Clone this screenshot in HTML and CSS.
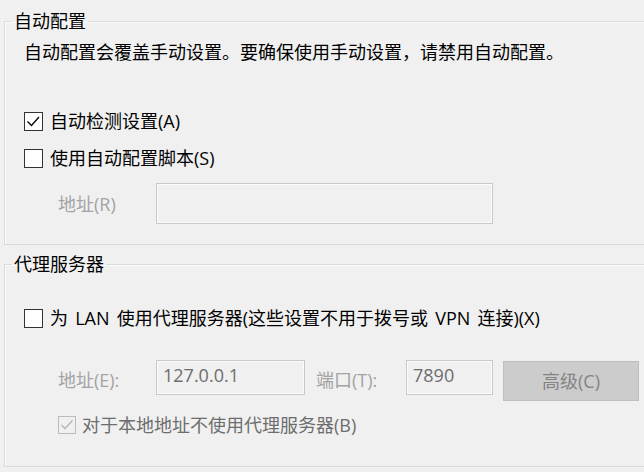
FILE: index.html
```html
<!DOCTYPE html>
<html lang="zh-CN">
<head>
<meta charset="utf-8">
<link rel="stylesheet" href="styles.css">
</head>
<body>
<fieldset class="group group-auto">
  <legend class="group-title">自动配置</legend>
  <div class="row desc">自动配置会覆盖手动设置。要确保使用手动设置，请禁用自动配置。</div>
  <label class="row check-row cb1">
    <span class="cbox"><svg viewBox="0 0 19 19" width="19" height="19"><path d="M3.5 9.5 L7.5 13.5 L15 5" fill="none" stroke="#000" stroke-width="1.3"/></svg></span>
    <span class="check-text">自动检测设置(A)</span>
  </label>
  <label class="row check-row cb2">
    <span class="cbox"></span>
    <span class="check-text">使用自动配置脚本(S)</span>
  </label>
  <div class="row field-row script-row">
    <span class="field-label dim">地址(R)</span>
    <span class="tbox tbox-script"></span>
  </div>
</fieldset>

<fieldset class="group group-proxy">
  <legend class="group-title">代理服务器</legend>
  <label class="row check-row lan-row">
    <span class="cbox"></span>
    <span class="check-text spaced">为 LAN 使用代理服务器(这些设置不用于拨号或 VPN 连接)(X)</span>
  </label>
  <div class="row addr-row">
    <span class="field-label dim addr-label">地址(E):</span>
    <span class="tbox tbox-addr">127.0.0.1</span>
    <span class="field-label dim port-label">端口(T):</span>
    <span class="tbox tbox-port">7890</span>
    <span class="btn">高级(C)</span>
  </div>
  <label class="row check-row bypass-row">
    <span class="cbox cbox-dis"><svg viewBox="0 0 18 18" width="18" height="18"><path d="M3.5 9 L7 12.5 L14.5 4.5" fill="none" stroke="#b4b4b4" stroke-width="1.3"/></svg></span>
    <span class="check-text gray">对于本地地址不使用代理服务器(B)</span>
  </label>
</fieldset>
</body>
</html>
```
FILE: styles.css
```css
html, body {
  margin: 0;
  padding: 0;
  background: #f0f0f0;
  width: 644px;
  height: 472px;
  overflow: hidden;
}
body {
  font-family: "Open Sans", "Noto Sans CJK SC", sans-serif;
  font-size: 18px;
  color: #000;
}
.group {
  border: 1px solid #dadada;
  box-shadow: inset 1px 1px 0 #fbfbfb;
  margin: 0 -20px 0 4px;
  padding: 0 0 0 0;
  min-width: 0;
}
.group-auto {
  margin-top: 9px;
  padding-bottom: 20px;
}
.group-proxy {
  margin-top: 7px;
  padding-bottom: 29px;
}
.group-title {
  margin-left: 7px;
  padding: 0 2px;
  height: 24px;
  line-height: 24px;
  font-size: 18px;
}
.row {
  display: flex;
  align-items: center;
  line-height: 24px;
  white-space: nowrap;
}
.desc {
  margin: 7px 0 0 19px;
  height: 24px;
}
.check-row {
  height: 24px;
  margin-left: 19px;
}
.cb1 { margin-top: 45px; }
.cb2 { margin-top: 13px; }
.lan-row { margin-top: 30px; }
.bypass-row { margin-top: 12px; margin-left: 53px; }
.cbox {
  width: 17px;
  height: 17px;
  border: 1px solid #333;
  background: #fff;
  flex: none;
  position: relative;
}
.cbox svg {
  display: block;
  margin: -1px;
}
.cbox-dis {
  width: 16px;
  height: 16px;
  border-color: #bcbcbc;
  background: #f0f0f0;
}
.check-text {
  margin-left: 7px;
}
.spaced {
  word-spacing: 2.5px;
}
.gray { color: #6d6d6d; margin-left: 6px; }
.dim { color: #a3a3a3; }
.field-row {
  margin-top: 13px;
  margin-left: 53px;
  height: 41px;
}
.field-label {
  width: 98px;
  flex: none;
}
.tbox {
  box-sizing: border-box;
  border: 1px solid #c9c9c9;
  box-shadow: inset 0 0 0 1px #fbfbfb;
  background: #f0f0f0;
  color: #6d6d6d;
  flex: none;
  padding: 2px 0 0 6px;
  line-height: 24px;
}
.tbox-script {
  width: 337px;
  height: 41px;
}
.addr-row {
  margin-top: 30px;
  margin-left: 53px;
  height: 41px;
  align-items: flex-start;
}
.addr-label {
  margin-top: 8px;
}
.tbox-addr {
  width: 149px;
  height: 35px;
}
.port-label {
  width: 90px;
  margin-left: 11px;
  margin-top: 8px;
}
.tbox-port {
  width: 87px;
  height: 35px;
}
.btn {
  box-sizing: border-box;
  margin-left: 10px;
  margin-top: 1px;
  width: 136px;
  height: 40px;
  background: #cccccc;
  border: 1px solid #bfbfbf;
  color: #838383;
  display: flex;
  align-items: center;
  justify-content: center;
  flex: none;
}
```
